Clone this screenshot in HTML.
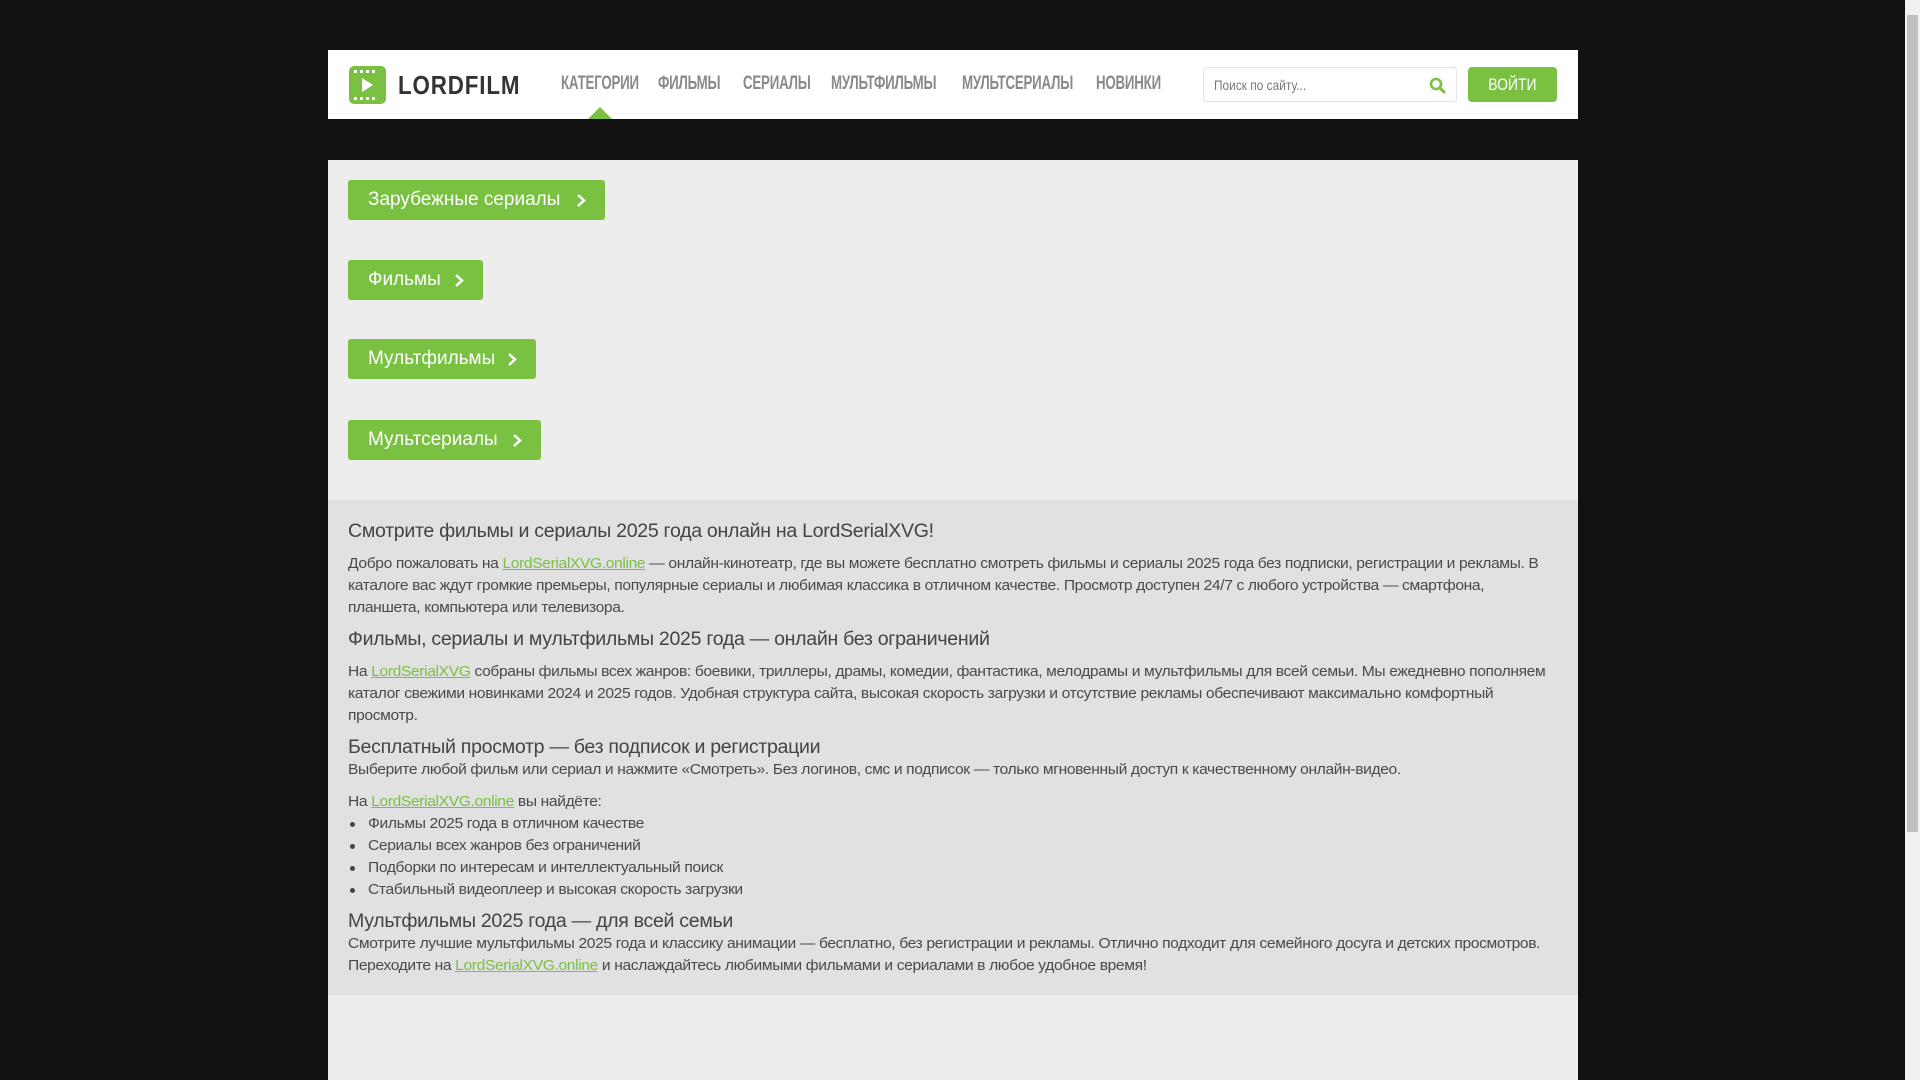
<!DOCTYPE html>
<html><head><meta charset="utf-8"><style>
*{margin:0;padding:0;box-sizing:border-box}
body{width:1920px;height:1080px;background:#111;font-family:"Liberation Sans",sans-serif;position:relative;overflow:hidden}
.sb{position:absolute;left:1905px;top:0;width:15px;height:1080px;background:#f1f1f1}
.sb .th{position:absolute;left:2px;top:15px;width:11px;height:817px;background:#c1c1c1}
.wrap{position:absolute;left:328px;top:50px;width:1250px;height:1030px;background:#ededed}
.hdr{position:absolute;left:0;top:0;width:1250px;height:69px;background:#fff}
.dark{position:absolute;left:0;top:69px;width:1250px;height:41px;background:#111}
.nav{position:absolute;top:23px;font-weight:bold;font-size:19px;color:#8a8a8a;transform:scaleX(.7);transform-origin:left;white-space:nowrap;letter-spacing:-.3px}
.tri{position:absolute;left:260px;top:57px;width:0;height:0;border-left:12px solid transparent;border-right:12px solid transparent;border-bottom:12px solid #7ac142}
.search{position:absolute;left:875px;top:17px;width:254px;height:35px;border:1px solid #e3e3e3;border-radius:4px;background:#fff}
.search span{position:absolute;left:10px;top:9px;font-size:14px;color:#777;transform:scaleX(.85);transform-origin:left;white-space:nowrap}
.login{position:absolute;left:1140px;top:17px;width:89px;height:35px;background:#7ac142;border-radius:4px;color:#fff;font-size:17px;text-align:center;line-height:35px}
.login span{display:inline-block;transform:scaleX(.82)}
.btn{position:absolute;left:20px;height:40px;background:#7ac142;border-radius:3px;color:#fff;font-size:19px;line-height:40px;padding-left:20px;white-space:nowrap}
.btn svg{position:absolute;right:19px;top:13px}
.txt{position:absolute;left:0;top:450px;width:1250px;height:495px;background:#e1e1e1}
.l{position:absolute;left:20px;white-space:nowrap;color:#4a4a4a;font-size:15px;letter-spacing:-.35px;transform:scaleX(1.04);transform-origin:left}
.h{position:absolute;left:20px;white-space:nowrap;color:#444;font-size:19px;letter-spacing:-.3px;transform:scaleX(1.03);transform-origin:left}
a{color:#7ac142;text-decoration:underline}
.dot{position:absolute;left:22px;width:5px;height:5px;border-radius:50%;background:#444}
</style></head><body>
<div class="sb"><div class="th"></div></div>
<div class="wrap">
<div class="hdr">
<svg style="position:absolute;left:21px;top:16px" width="37" height="38" viewBox="0 0 37 38"><rect width="37" height="38" rx="5" fill="#7ac142"/><g fill="#fff"><rect x="5" y="4" width="3" height="3"/><rect x="11" y="4" width="3" height="3"/><rect x="17" y="4" width="3" height="3"/><rect x="23" y="4" width="3" height="3"/><rect x="5" y="31" width="3" height="3"/><rect x="11" y="31" width="3" height="3"/><rect x="17" y="31" width="3" height="3"/><rect x="23" y="31" width="3" height="3"/><path d="M13 12 L24 19 L13 26Z"/></g></svg>
<div style="position:absolute;left:70px;top:20px;font-size:26px;font-weight:bold;color:#333;letter-spacing:1px;transform:scaleX(.86);transform-origin:left">LORDFILM</div>
<div class="nav" style="left:233px">КАТЕГОРИИ</div>
<div class="nav" style="left:330px">ФИЛЬМЫ</div>
<div class="nav" style="left:415px">СЕРИАЛЫ</div>
<div class="nav" style="left:503px">МУЛЬТФИЛЬМЫ</div>
<div class="nav" style="left:634px">МУЛЬТСЕРИАЛЫ</div>
<div class="nav" style="left:768px">НОВИНКИ</div>
<div class="tri"></div>
<div class="search"><span>Поиск по сайту...</span>
<svg style="position:absolute;left:225px;top:9px" width="17" height="17" viewBox="0 0 17 17"><circle cx="7" cy="7" r="5" fill="none" stroke="#7ac142" stroke-width="2.6"/><path d="M10.5 10.5 L15 15" stroke="#7ac142" stroke-width="3" stroke-linecap="round"/></svg></div>
<div class="login"><span>ВОЙТИ</span></div>
</div>
<div class="dark"></div>
<div class="btn" style="top:130px;width:257px">Зарубежные сериалы<svg width="10" height="15" viewBox="0 0 10 15"><path d="M2 2 L8 7.5 L2 13" fill="none" stroke="#fff" stroke-width="2.5"/></svg></div>
<div class="btn" style="top:210px;width:135px">Фильмы<svg width="10" height="15" viewBox="0 0 10 15"><path d="M2 2 L8 7.5 L2 13" fill="none" stroke="#fff" stroke-width="2.5"/></svg></div>
<div class="btn" style="top:289px;width:188px">Мультфильмы<svg width="10" height="15" viewBox="0 0 10 15"><path d="M2 2 L8 7.5 L2 13" fill="none" stroke="#fff" stroke-width="2.5"/></svg></div>
<div class="btn" style="top:370px;width:193px">Мультсериалы<svg width="10" height="15" viewBox="0 0 10 15"><path d="M2 2 L8 7.5 L2 13" fill="none" stroke="#fff" stroke-width="2.5"/></svg></div>
<div class="txt">
<div class="h" style="top:21px">Смотрите фильмы и сериалы 2025 года онлайн на LordSerialXVG!</div>
<div class="l" style="top:55px">Добро пожаловать на <a>LordSerialXVG.online</a> — онлайн-кинотеатр, где вы можете бесплатно смотреть фильмы и сериалы 2025 года без подписки, регистрации и рекламы. В</div>
<div class="l" style="top:77px">каталоге вас ждут громкие премьеры, популярные сериалы и любимая классика в отличном качестве. Просмотр доступен 24/7 с любого устройства — смартфона,</div>
<div class="l" style="top:99px">планшета, компьютера или телевизора.</div>
<div class="h" style="top:129px">Фильмы, сериалы и мультфильмы 2025 года — онлайн без ограничений</div>
<div class="l" style="top:163px">На <a>LordSerialXVG</a> собраны фильмы всех жанров: боевики, триллеры, драмы, комедии, фантастика, мелодрамы и мультфильмы для всей семьи. Мы ежедневно пополняем</div>
<div class="l" style="top:185px">каталог свежими новинками 2024 и 2025 годов. Удобная структура сайта, высокая скорость загрузки и отсутствие рекламы обеспечивают максимально комфортный</div>
<div class="l" style="top:207px">просмотр.</div>
<div class="h" style="top:237px">Бесплатный просмотр — без подписок и регистрации</div>
<div class="l" style="top:261px">Выберите любой фильм или сериал и нажмите «Смотреть». Без логинов, смс и подписок — только мгновенный доступ к качественному онлайн-видео.</div>
<div class="l" style="top:293px">На <a>LordSerialXVG.online</a> вы найдёте:</div>
<div class="dot" style="top:322px"></div><div class="l" style="top:315px;left:40px">Фильмы 2025 года в отличном качестве</div>
<div class="dot" style="top:344px"></div><div class="l" style="top:337px;left:40px">Сериалы всех жанров без ограничений</div>
<div class="dot" style="top:366px"></div><div class="l" style="top:359px;left:40px">Подборки по интересам и интеллектуальный поиск</div>
<div class="dot" style="top:388px"></div><div class="l" style="top:381px;left:40px">Стабильный видеоплеер и высокая скорость загрузки</div>
<div class="h" style="top:411px">Мультфильмы 2025 года — для всей семьи</div>
<div class="l" style="top:435px">Смотрите лучшие мультфильмы 2025 года и классику анимации — бесплатно, без регистрации и рекламы. Отлично подходит для семейного досуга и детских просмотров.</div>
<div class="l" style="top:457px">Переходите на <a>LordSerialXVG.online</a> и наслаждайтесь любимыми фильмами и сериалами в любое удобное время!</div>
</div>
</div>
</body></html>
